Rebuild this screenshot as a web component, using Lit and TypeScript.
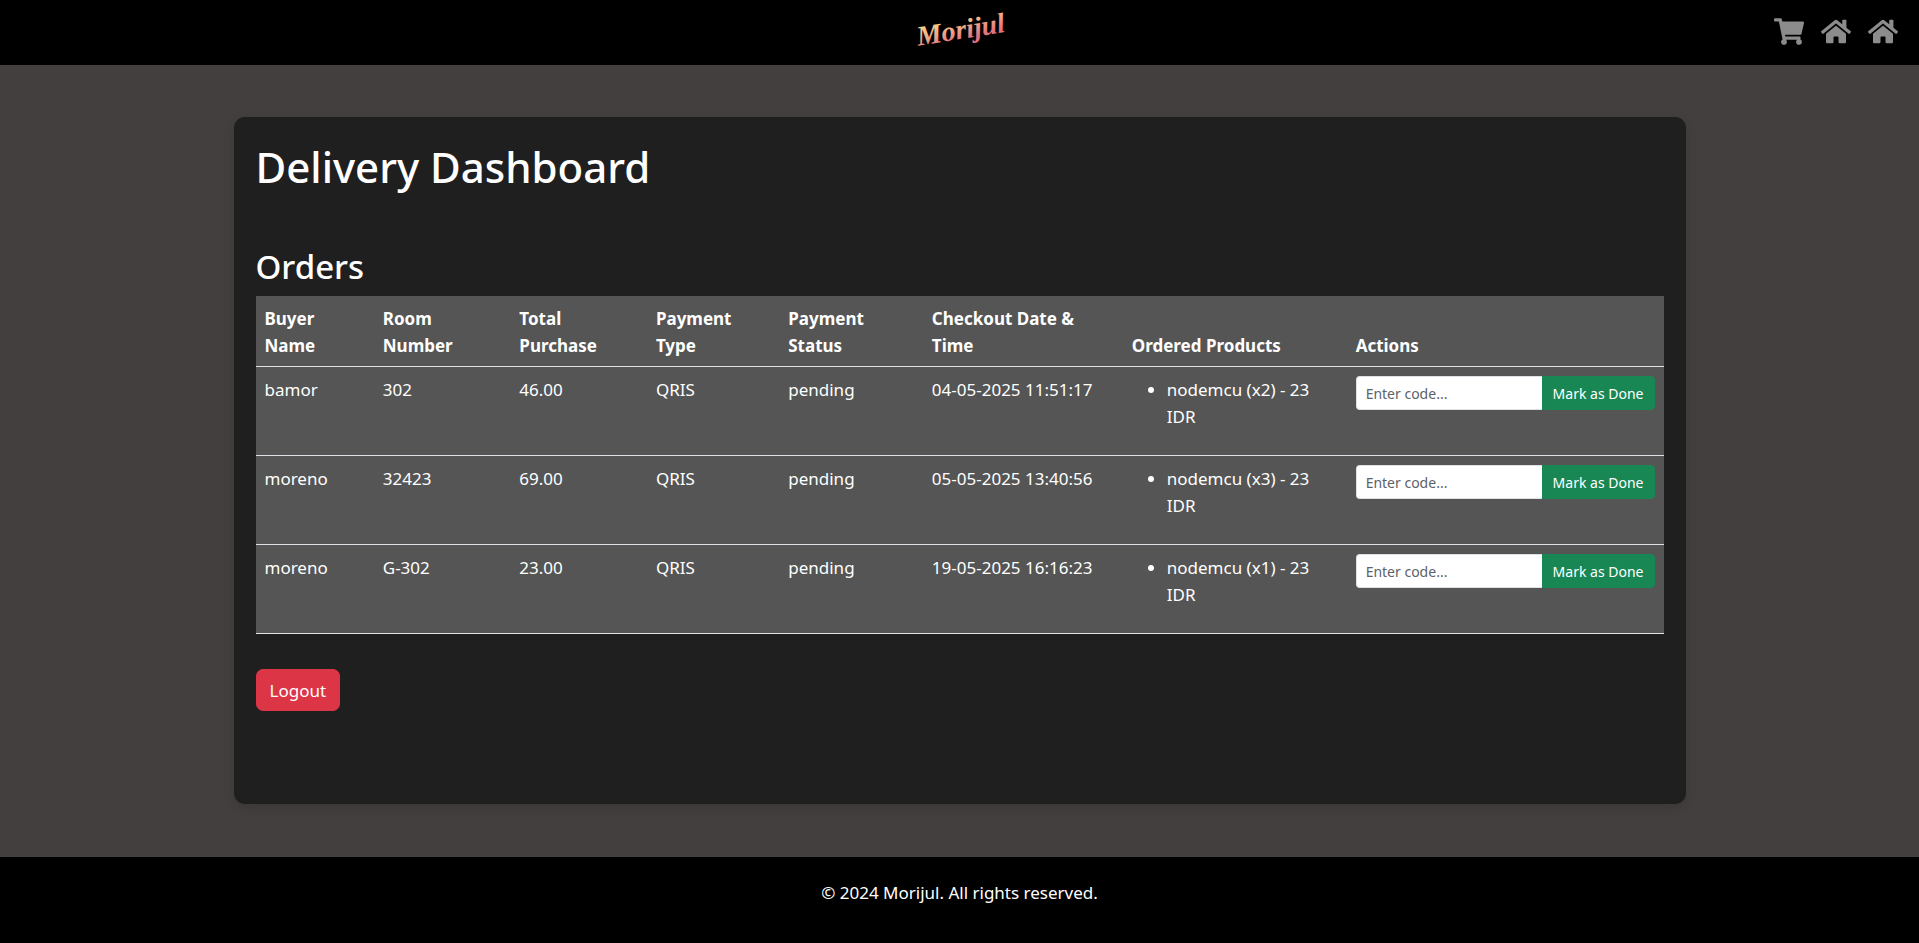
import { LitElement, html, css, svg } from "lit";
import { customElement, property, state } from "lit/decorators.js";

interface Order {
  buyer: string;
  room: string;
  total: string;
  payment: string;
  status: string;
  checkout: string;
  products: string[];
}

const cartPath =
  "M528.12 301.319l47.273-208C578.806 78.301 567.391 64 551.99 64H159.208l-9.166-44.81C147.758 8.021 137.93 0 126.529 0H24C10.745 0 0 10.745 0 24v16c0 13.255 10.745 24 24 24h69.883l70.248 343.435C147.325 417.1 136 435.222 136 456c0 30.928 25.072 56 56 56s56-25.072 56-56c0-15.674-6.447-29.835-16.824-40h209.647C430.447 426.165 424 440.326 424 456c0 30.928 25.072 56 56 56s56-25.072 56-56c0-22.172-12.888-41.332-31.579-50.405l5.517-24.276c3.413-15.018-8.002-29.319-23.403-29.319H218.117l-6.545-32h293.145c11.206 0 20.92-7.754 23.403-18.681z";
const homePath =
  "M280.37 148.26L96 300.11V464a16 16 0 0 0 16 16l112.06-.29a16 16 0 0 0 15.92-16V368a16 16 0 0 1 16-16h64a16 16 0 0 1 16 16v95.64a16 16 0 0 0 16 16.05L464 480a16 16 0 0 0 16-16V300L295.67 148.26a12.19 12.19 0 0 0-15.3 0zM571.6 251.47L488 182.56V44.05a12 12 0 0 0-12-12h-56a12 12 0 0 0-12 12v72.61L318.47 43a48 48 0 0 0-61 0L4.34 251.47a12 12 0 0 0-1.6 16.9l25.5 31A12 12 0 0 0 45.15 301l235.22-193.74a12.19 12.19 0 0 1 15.3 0L530.9 301a12 12 0 0 0 16.9-1.6l25.5-31a12 12 0 0 0-1.7-16.93z";

@customElement("site-header")
export class SiteHeader extends LitElement {
  static styles = css`
    :host {
      display: block;
      background: #000;
    }
    .bar {
      display: grid;
      grid-template-columns: 1fr auto 1fr;
      align-items: center;
      height: 65px;
      padding: 0 21px;
    }
    .brand {
      grid-column: 2;
      display: block;
      height: 65px;
    }
    .brand svg {
      display: block;
    }
    .word {
      font: italic 700 28px "Liberation Serif", serif;
    }
    .links {
      display: flex;
      justify-content: flex-end;
      gap: 17px;
      padding-bottom: 3px;
    }
    .link {
      display: block;
      color: #8c8c8c;
    }
    .link svg {
      display: block;
      width: 30px;
      height: 27px;
      fill: currentColor;
    }
  `;

  private icon(label: string, path: string) {
    return html`<a class="link" href="#" aria-label=${label}>
      <svg viewBox="0 0 576 512" aria-hidden="true">${svg`<path d=${path}></path>`}</svg>
    </a>`;
  }

  render() {
    return html`
      <header class="bar">
        <a class="brand" href="#" aria-label="Morijul">
          <svg width="96" height="65" viewBox="0 0 96 65">
            <defs>
              <linearGradient id="glow" x1="0" y1="0" x2="0.4" y2="1">
                <stop offset="0.15" stop-color="#fbdc8c"></stop>
                <stop offset="0.55" stop-color="#f0a888"></stop>
                <stop offset="0.9" stop-color="#e2737f"></stop>
              </linearGradient>
            </defs>
            <text class="word" x="49" y="39" text-anchor="middle" fill="url(#glow)" transform="rotate(-9 48 32)">Morijul</text>
          </svg>
        </a>
        <nav class="links" aria-label="Main">
          ${this.icon("Cart", cartPath)} ${this.icon("Home", homePath)}
          ${this.icon("Dashboard", homePath)}
        </nav>
      </header>
    `;
  }
}

@customElement("orders-table")
export class OrdersTable extends LitElement {
  @property({ attribute: false }) orders: Order[] = [];

  static styles = css`
    :host {
      display: block;
    }
    .orders {
      width: 100%;
      table-layout: fixed;
      border-collapse: collapse;
      background: #555;
      color: #fff;
      line-height: 27px;
    }
    .buyer { width: 8.4%; }
    .room,
    .total { width: 9.7%; }
    .payment { width: 9.4%; }
    .status { width: 10.2%; }
    .date { width: 14.2%; }
    .products { width: 15.9%; }
    .actions { width: 22.5%; }
    .head,
    .cell {
      padding: 9px 9px 7px;
      border-bottom: 1px solid #dee2e6;
      text-align: left;
    }
    .head {
      font-weight: 700;
      vertical-align: bottom;
    }
    .cell {
      vertical-align: top;
    }
    .list {
      margin: 0 0 18px;
      padding-left: 35px;
    }
    .form {
      display: flex;
      height: 34px;
    }
    .code,
    .done {
      box-sizing: border-box;
      margin: 0;
      font: inherit;
      font-size: 14px;
      line-height: 24px;
    }
    .code {
      flex: 1;
      min-width: 0;
      padding: 5px 9px 3px;
      border: 1px solid #dee2e6;
      border-right: 0;
      border-radius: 4px 0 0 4px;
      background: #fff;
      color: #212529;
    }
    .code::placeholder {
      color: #5c6268;
      opacity: 1;
    }
    .done {
      flex: none;
      padding: 5px 10px 3px;
      border: 1px solid #198754;
      border-radius: 0 4px 4px 0;
      background: #198754;
      color: #fff;
      cursor: pointer;
    }
  `;

  render() {
    return html`
      <table class="orders">
        <colgroup>
          <col class="buyer" />
          <col class="room" />
          <col class="total" />
          <col class="payment" />
          <col class="status" />
          <col class="date" />
          <col class="products" />
          <col class="actions" />
        </colgroup>
        <thead>
          <tr>
            <th class="head" scope="col">Buyer<br />Name</th>
            <th class="head" scope="col">Room<br />Number</th>
            <th class="head" scope="col">Total<br />Purchase</th>
            <th class="head" scope="col">Payment<br />Type</th>
            <th class="head" scope="col">Payment<br />Status</th>
            <th class="head" scope="col">Checkout Date &amp;<br />Time</th>
            <th class="head" scope="col">Ordered Products</th>
            <th class="head" scope="col">Actions</th>
          </tr>
        </thead>
        <tbody>
          ${this.orders.map(
            (order) => html`
              <tr>
                <td class="cell">${order.buyer}</td>
                <td class="cell">${order.room}</td>
                <td class="cell">${order.total}</td>
                <td class="cell">${order.payment}</td>
                <td class="cell">${order.status}</td>
                <td class="cell">${order.checkout}</td>
                <td class="cell">
                  <ul class="list">
                    ${order.products.map((product) => html`<li>${product}</li>`)}
                  </ul>
                </td>
                <td class="cell">
                  <form class="form" @submit=${(e: Event) => e.preventDefault()}>
                    <input class="code" type="text" placeholder="Enter code..." aria-label="Delivery code" />
                    <button class="done" type="submit">Mark as Done</button>
                  </form>
                </td>
              </tr>
            `
          )}
        </tbody>
      </table>
    `;
  }
}

@customElement("app-root")
export class AppRoot extends LitElement {
  @state() private orders: Order[] = [
    {
      buyer: "bamor",
      room: "302",
      total: "46.00",
      payment: "QRIS",
      status: "pending",
      checkout: "04-05-2025 11:51:17",
      products: ["nodemcu (x2) - 23 IDR"],
    },
    {
      buyer: "moreno",
      room: "32423",
      total: "69.00",
      payment: "QRIS",
      status: "pending",
      checkout: "05-05-2025 13:40:56",
      products: ["nodemcu (x3) - 23 IDR"],
    },
    {
      buyer: "moreno",
      room: "G-302",
      total: "23.00",
      payment: "QRIS",
      status: "pending",
      checkout: "19-05-2025 16:16:23",
      products: ["nodemcu (x1) - 23 IDR"],
    },
  ];

  static styles = css`
    :host {
      display: flex;
      flex-direction: column;
      min-height: 100vh;
      background: #433f3e;
      color: #fff;
      font-family: "Segoe UI", "Noto Sans", sans-serif;
      font-size: 17px;
      line-height: 27px;
    }
    .main {
      display: flex;
      flex: 1;
      justify-content: center;
      padding: 52px 22px 53px;
    }
    .card {
      box-sizing: border-box;
      width: 100%;
      max-width: 1452px;
      padding: 22px;
      border-radius: 11px;
      background: #1f1f1f;
      box-shadow: 0 4px 11px rgba(0, 0, 0, 0.12);
    }
    .title {
      margin: 0 0 51px;
      font-size: 42px;
      font-weight: 500;
      line-height: 55px;
    }
    .subtitle {
      margin: 0 0 7px;
      font-size: 33px;
      font-weight: 500;
      line-height: 44px;
    }
    .logout {
      margin: 35px 0 0;
      padding: 7px 13px 6px;
      border: 1px solid #dc3545;
      border-radius: 7px;
      background: #dc3545;
      color: #fff;
      font: inherit;
      cursor: pointer;
    }
    .footer {
      padding: 22px 22px 37px;
      background: #000;
      text-align: center;
    }
    .note {
      margin: 0;
    }
  `;

  render() {
    return html`
      <site-header></site-header>
      <main class="main">
        <section class="card">
          <h1 class="title">Delivery Dashboard</h1>
          <h2 class="subtitle">Orders</h2>
          <orders-table .orders=${this.orders}></orders-table>
          <button class="logout" type="button">Logout</button>
        </section>
      </main>
      <footer class="footer">
        <p class="note">© 2024 Morijul. All rights reserved.</p>
      </footer>
    `;
  }
}
